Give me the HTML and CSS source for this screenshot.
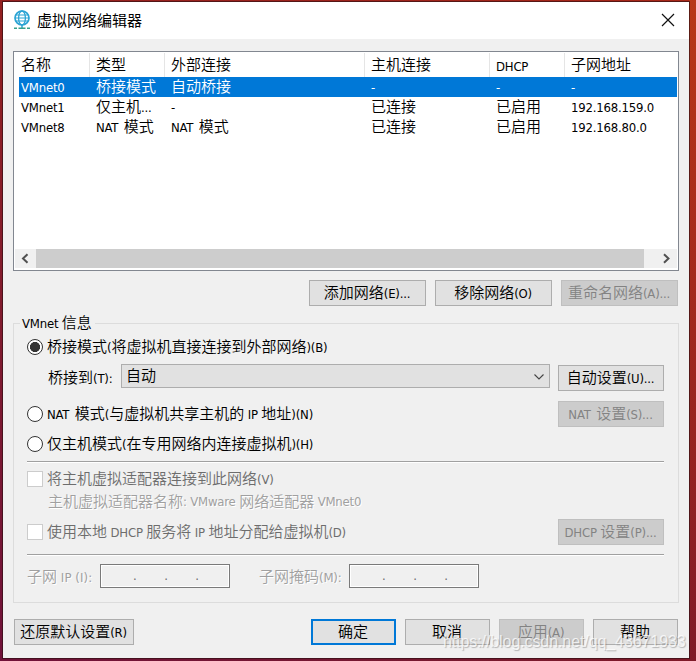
FILE: index.html
```html
<!DOCTYPE html>
<html lang="zh-CN">
<head>
<meta charset="utf-8">
<title>虚拟网络编辑器</title>
<link rel="stylesheet" href="styles.css">
</head>
<body>
<main class="window">
  <header class="titlebar">
    <svg class="globe" width="18" height="20" viewBox="0 0 18 20" fill="none" stroke="#2ba3d4">
      <circle cx="9" cy="8" r="7" stroke-width="1.7"/>
      <ellipse cx="9" cy="8" rx="3.4" ry="7" stroke-width="1.3"/>
      <path d="M2.8 5h12.4M2 8h14M2.8 11h12.4" stroke-width="1.2"/>
      <path d="M9 15v3" stroke-width="1.5"/>
      <path d="M1 18.3h3M5.5 18.3h7M14 18.3h3" stroke="#35a08c" stroke-width="1.6"/>
    </svg>
    <h1>虚拟网络编辑器</h1>
    <svg class="close" width="14" height="14" viewBox="0 0 14 14" stroke="#111" stroke-width="1.2"><path d="M1 1l12 12M13 1L1 13"/></svg>
  </header>

  <section class="list">
    <div class="row head"><span>名称</span><span>类型</span><span>外部连接</span><span>主机连接</span><span class="latin"><i>DHCP</i></span><span>子网地址</span></div>
    <div class="row selected"><span><i>VMnet0</i></span><span>桥接模式</span><span>自动桥接</span><span><i>-</i></span><span><i>-</i></span><span><i>-</i></span></div>
    <div class="row"><span><i>VMnet1</i></span><span>仅主机<i>...</i></span><span><i>-</i></span><span>已连接</span><span>已启用</span><span><i>192.168.159.0</i></span></div>
    <div class="row"><span><i>VMnet8</i></span><span><i class="gap">NAT </i>模式</span><span><i class="gap">NAT </i>模式</span><span>已连接</span><span>已启用</span><span><i>192.168.80.0</i></span></div>
    <div class="scrollbar">
      <svg width="21" height="19" viewBox="0 0 21 19" fill="none" stroke="#505050" stroke-width="2"><path d="M12.5 5.2L8 9.5l4.500 4.300"/></svg>
      <div class="thumb"></div>
      <svg width="33" height="19" viewBox="0 0 33 19" fill="none" stroke="#505050" stroke-width="2"><path d="M20 5.200l4.500 4.300-4.500 4.300"/></svg>
    </div>
  </section>

  <div class="actions">
    <button>添加网络<i>(E)...</i></button>
    <button>移除网络<i>(O)</i></button>
    <button disabled>重命名网络<i>(A)...</i></button>
  </div>

  <fieldset class="group">
    <legend><i>VMnet </i>信息</legend>
    <div class="line bridged"><span class="radio on"></span><span>桥接模式<i>(</i>将虚拟机直接连接到外部网络<i>)(B)</i></span></div>
    <div class="line target">
      <span class="caption">桥接到<i>(T):</i></span>
      <div class="select"><span>自动</span><svg width="12" height="8" viewBox="0 0 12 8" fill="none" stroke="#444" stroke-width="1.100"><path d="M1.500 1.500L6 6l4.500-4.500"/></svg></div>
      <button class="side auto">自动设置<i>(U)...</i></button>
    </div>
    <div class="line nat"><span class="radio"></span><span><i class="gap">NAT </i>模式<i>(</i>与虚拟机共享主机的<i> IP </i>地址<i>)(N)</i></span><button class="side" disabled><i class="gap">NAT </i>设置<i>(S)...</i></button></div>
    <div class="line host"><span class="radio"></span><span>仅主机模式<i>(</i>在专用网络内连接虚拟机<i>)(H)</i></span></div>
    <div class="rule"></div>
    <div class="line adapter dim"><span class="check"></span><span>将主机虚拟适配器连接到此网络<i>(V)</i></span></div>
    <div class="line adapter-name etched">主机虚拟适配器名称<i>: VMware </i>网络适配器<i> VMnet0</i></div>
    <div class="line dhcp dim"><span class="check"></span><span>使用本地<i> DHCP </i>服务将<i> IP </i>地址分配给虚拟机<i>(D)</i></span><button class="side" disabled><i>DHCP </i>设置<i>(P)...</i></button></div>
    <div class="rule"></div>
    <div class="line subnet">
      <span class="etched ip-label">子网<i> IP (I):</i></span>
      <div class="ip"><b>.</b><b>.</b><b>.</b></div>
      <span class="etched mask-label">子网掩码<i>(M):</i></span>
      <div class="ip"><b>.</b><b>.</b><b>.</b></div>
    </div>
  </fieldset>

  <footer class="footer">
    <button class="restore">还原默认设置<i>(R)</i></button>
    <button class="primary">确定</button>
    <button>取消</button>
    <button disabled>应用<i>(A)</i></button>
    <button>帮助</button>
  </footer>
</main>
<div class="watermark">https://blog.csdn.net/qq_43671933</div>
</body>
</html>
```
FILE: styles.css
```css
* { box-sizing: border-box; }
html, body { height: 661px; overflow: hidden; }
body {
  margin: 0;
  padding: 2px 0 0 3px;
  background:
    linear-gradient(#942020, #841c2c 40%, #70123a) left / 3px 100% no-repeat,
    linear-gradient(#b83818, #a82c1c 35%, #982420 65%, #801a28) right / 7px 100% no-repeat,
    linear-gradient(90deg, #701238, #761830 60%, #801a28) bottom / 100% 3px no-repeat,
    linear-gradient(90deg, #942020, #a82818) top / 100% 3px no-repeat;
  font: 15px/20px "Noto Sans CJK SC", sans-serif;
  font-weight: 350;
  color: #000;
}
i {
  font: 13px/1 "DejaVu Sans Condensed", "Open Sans", sans-serif;
  letter-spacing: -.2px;
  white-space: pre;
}
.gap { margin-right: 2px; }
.window {
  width: 686px;
  height: 656px;
  background: #f0f0f0;
  box-shadow: 0 0 0 1px rgba(45, 15, 20, .65);
  white-space: nowrap;
}
.titlebar {
  height: 37px;
  padding: 0 14px 0 10px;
  background: #fff;
  display: flex;
  align-items: center;
}
.titlebar h1 { margin: -2px auto 0 6px; font-size: 15px; font-weight: 400; }
.globe, .close { margin-top: -1px; }

.list {
  width: 666px;
  height: 220px;
  margin: 12px 0 0 10px;
  padding: 1px;
  border: 1px solid #828790;
  background: #fff;
  display: flex;
  flex-direction: column;
}
.row {
  height: 20px;
  margin-left: 4px;
  display: grid;
  grid-template-columns: 71px 75px 200px 125px 75px 1fr;
}
.row span { padding-left: 6px; line-height: 18px; }
.row span:first-child { padding-left: 2px; }
.head { height: 24px; }
.head span { line-height: 21px; border-right: 1px solid #e5e5e5; }
.head .latin { line-height: 23px; }
.head span:last-child { border: 0; }
.selected { background: #0078d7; color: #fff; }
.scrollbar {
  height: 19px;
  margin-top: auto;
  margin-bottom: 1px;
  display: flex;
  background: #f0f0f0;
}
.thumb { flex: 1; background: #cdcdcd; }

button {
  height: 26px;
  padding: 0 1px 2px 0;
  border: 1px solid #adadad;
  background: #e1e1e1;
  font: inherit;
  line-height: 22px;
  color: #000;
  white-space: nowrap;
}
button:disabled { background: #ccc; border-color: #bfbfbf; color: #838383; }
.actions { margin: 9px 11px 0 0; display: flex; justify-content: flex-end; gap: 9px; }
.actions button { width: 117px; }

.group {
  width: 666px;
  height: 290px;
  margin: 7px 0 0 10px;
  padding: 0 14px 0 13px;
  border: 1px solid #dcdcdc;
}
legend { height: 20px; margin-left: -7px; padding: 0 3px 0 2px; line-height: 18px; }
.line { display: flex; align-items: center; }
.radio, .check { flex: none; width: 16px; height: 16px; margin-right: 4px; background: #fff; }
.radio { border: 1px solid #333; border-radius: 50%; }
.radio.on { background: radial-gradient(circle, #333 0 4.800px, #fff 5.300px); }
.check { border: 1px solid #ccc; }
.side { width: 106px; margin-left: auto; }
.bridged { height: 20px; margin-top: 4px; }
.bridged > span:last-child, .nat > span:nth-child(2), .host > span:last-child,
.dim > span:nth-child(2) { margin-top: -2px; }
.target { height: 28px; margin-top: 6px; }
.caption { width: 94px; padding-left: 21px; }
.target .side { margin-top: 1px; }
.select {
  width: 429px;
  height: 24px;
  padding: 0 4px 2px 4px;
  border: 1px solid #adadad;
  background: #e1e1e1;
  display: flex;
  align-items: center;
  justify-content: space-between;
  margin-bottom: 2px;
}
.select svg { margin-top: 3px; }
.nat { height: 26px; margin-top: 10px; }
.host { height: 20px; margin-top: 7px; }
.rule { height: 2px; border-top: 1px solid #a0a0a0; border-bottom: 1px solid #fff; }
.host + .rule { margin-top: 7px; }
.dim { color: #6d6d6d; }
.adapter { height: 20px; margin-top: 6px; }
.etched { color: #a0a0a0; text-shadow: 1px 1px #fff; }
.adapter-name { height: 20px; margin-top: 2px; padding-left: 21px; }
.dhcp { height: 26px; margin-top: 8px; }
.dhcp + .rule { margin-top: 9px; }
.subnet { height: 24px; margin-top: 8px; }
.ip-label { width: 73px; }
.ip-label i { letter-spacing: .1px; }
.mask-label { width: 119px; padding-left: 29px; }
.ip {
  width: 130px;
  height: 24px;
  padding: 0 30px 0 32px;
  border: 1px solid #7a7a7a;
  box-shadow: inset 0 0 0 1px #fff;
  display: flex;
  justify-content: space-between;
  color: #6d6d6d;
}
.ip b { font: 13px/22px "DejaVu Sans Condensed", sans-serif; }

.footer { margin: 16px 11px 0; display: flex; gap: 9px; }
.footer button { width: 85px; }
.footer .restore { width: 120px; margin-right: auto; }
.footer .primary { border: 2px solid #0078d7; line-height: 20px; }
.watermark {
  position: absolute;
  left: 443px;
  top: 632px;
  font: 16px/20px "Liberation Sans", sans-serif;
  letter-spacing: -.09px;
  color: rgba(255, 255, 255, .75);
  text-shadow: 1px 1px 1px rgba(90, 90, 90, .4);
}
```
